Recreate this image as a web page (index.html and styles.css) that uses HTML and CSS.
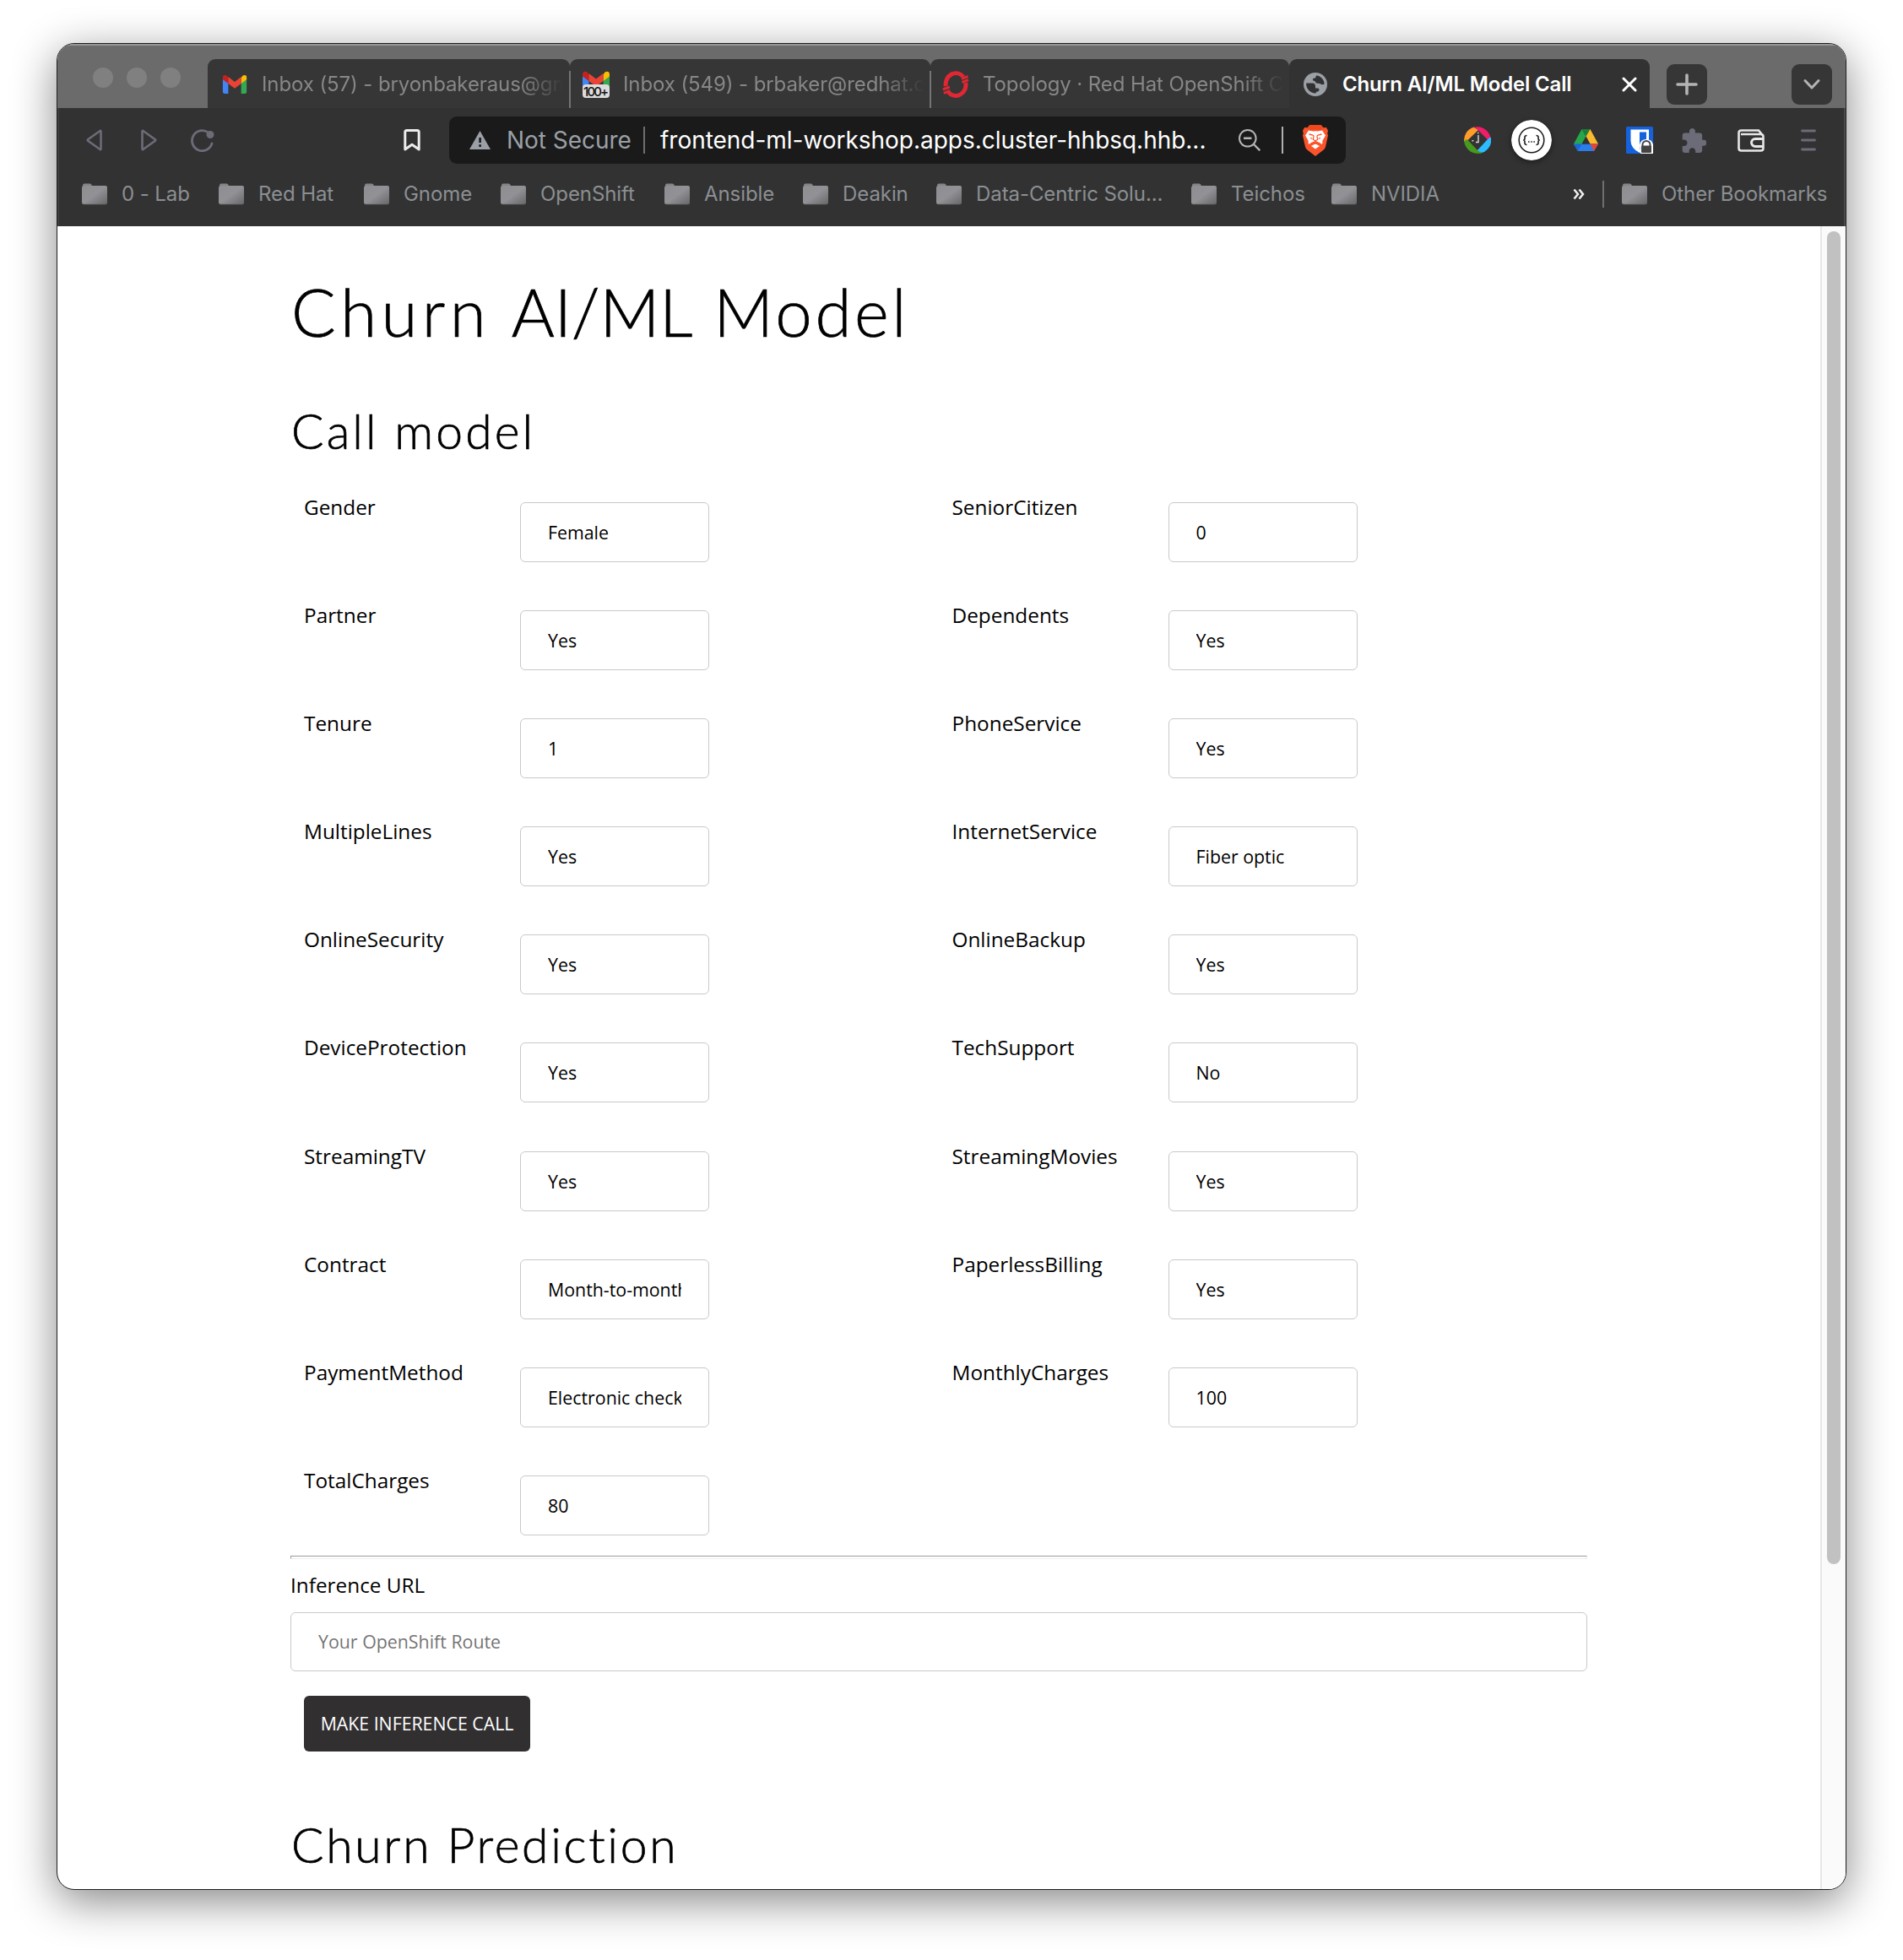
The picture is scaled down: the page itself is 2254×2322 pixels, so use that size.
FILE: index.html
```html
<!DOCTYPE html>
<html lang="en">
<head>
<meta charset="utf-8">
<title>Churn AI/ML Model Call</title>
<link rel="stylesheet" href="styles.css">
</head>
<body>
<svg class="defs" width="0" height="0" aria-hidden="true">
  <defs>
    <linearGradient id="fg" x1="0" y1="0" x2="1" y2="1"><stop offset="0" stop-color="#8e8d92"/><stop offset=".5" stop-color="#929196"/><stop offset="1" stop-color="#686769"/></linearGradient>
    <symbol id="folder" viewBox="0 0 30 26"><path d="M1 5V2.500Q1 .5 3 .5h6.500q1.500 0 2 1.500L12 3.200H28Q30 3.500 30 5z" fill="#848484"/><rect x="0" y="3.500" width="30" height="22" rx="2.500" fill="#555"/><rect x="0" y="3" width="30" height="21.800" rx="2.500" fill="url(#fg)"/></symbol>
    <symbol id="gmail" viewBox="0 0 30 23"><path d="M0 5v15.500Q0 23 2.500 23H7V9z" fill="#4285f4"/><path d="M30 5v15.500q0 2.500-2.500 2.500H23V9z" fill="#34a853"/><path d="M23 3.500V10.500L30 5.300V3.200Q30 0 27 0 25.800 0 24.800.8z" fill="#fbbc04"/><path d="M7 3.500V10.500L0 5.300V3.200Q0 0 3 0 4.200 0 5.200.8z" fill="#c5221f"/><path d="M7 2.200l8 6.100 8-6.100v8.300l-8 6-8-6z" fill="#ea4335"/></symbol>
  </defs>
</svg>
<div class="window">
  <div class="titlebar">
    <div class="lights"><i></i><i></i><i></i></div>
    <div class="tab tab-first">
      <svg class="gm" viewBox="0 0 30 23"><use href="#gmail"/></svg>
      <span class="tab-title">Inbox (57) - bryonbakeraus@gmail.com</span>
    </div>
    <div class="tab tab-second">
      <svg class="ic32" viewBox="0 0 32 32"><use href="#gmail" width="32" height="26" x="0" y="0"/><rect x="0" y="16" width="32" height="16" rx="4" fill="#dcdcdc"/><text class="badge-text" x="16" y="29.500" text-anchor="middle" textLength="30">100+</text></svg>
      <span class="tab-title">Inbox (549) - brbaker@redhat.com</span>
    </div>
    <div class="tab tab-third">
      <svg class="ic32" viewBox="0 0 32 32" fill="none" stroke="#e02733" stroke-width="5"><path d="M4.300 18A12 13 0 0 1 25 7"/><path d="M27.800 14A12 13 0 0 1 7 25"/><path d="M.8 22l8-3M1.800 26.300l7.500-2.800M23 9.300l7.500-2.800M23.500 13.500l7.500-2.800" stroke-width="3"/></svg>
      <span class="tab-title">Topology · Red Hat OpenShift Console</span>
    </div>
    <div class="tab tab-active">
      <svg class="globe" viewBox="0 0 28 28"><circle cx="14" cy="14" r="14" fill="#9aa0a6"/><path d="M3.200 12.500h7.500q3.300.3 3.300 3.500v2.500h3q2 .5 1.500 2.500-.7 1.800-3 1.800-.7 0-1 1.600A11 11 0 0 1 3.200 12.500z" fill="#323232"/><path d="M15.500 3.200q-1 .8-1 2-.2 1.500-2.500 1.600-1.500.4-1 2 .2 1.200 2.500 1.200.3 2.600 2.700 2.800 2.500-.5 4 .7 2 1.500 4.500 0A11 11 0 0 0 15.500 3.200z" fill="#323232"/></svg>
      <span class="tab-title">Churn AI/ML Model Call</span>
      <svg class="close" viewBox="0 0 18 18"><path d="M2 2l14 14M16 2L2 16" stroke="#fff" stroke-width="3" stroke-linecap="round"/></svg>
    </div>
    <div class="sqbtn"><svg width="26" height="26" viewBox="0 0 26 26"><path d="M13 2v22M2 13h22" stroke="#b4b4b4" stroke-width="3.600" stroke-linecap="round"/></svg></div>
    <div class="sqbtn sqbtn-end"><svg width="22" height="16" viewBox="0 0 22 16"><path d="M3 3.500l8 8.500 8-8.500" fill="none" stroke="#b4b4b4" stroke-width="3" stroke-linecap="round" stroke-linejoin="round"/></svg></div>
  </div>

  <div class="toolbar">
    <svg class="nav-back" viewBox="0 0 20 26"><path d="M17.500 2.500v21q0 1-1 .5L2.200 13.800q-.8-.8 0-1.600L16.500 2q1-.5 1 .5z"/></svg>
    <svg class="nav-fwd" viewBox="0 0 20 26"><path d="M2.500 2.500v21q0 1 1 .5L17.800 13.800q.8-.8 0-1.600L3.500 2q-1-.5-1 .5z"/></svg>
    <svg class="nav-reload" viewBox="0 0 28 27"><path d="M25 17A12 12 0 1 1 20.500 3.900"/><circle cx="23" cy="6.500" r="4.500" fill="#6b6c78" stroke="none"/></svg>
    <svg class="nav-mark" viewBox="0 0 20 26"><path d="M1.800 3.500q0-2 2-2h12.400q2 0 2 2V24l-8.200-5.800L1.800 24z"/></svg>
    <div class="omnibox">
      <svg class="warn" viewBox="0 0 25 22"><path d="M12.500 0L25 22H0z" fill="#9aa0a6"/><path d="M11.300 8h2.600v6h-2.600zM11.300 16.300h2.600v2.700h-2.600z" fill="#1a1a1a"/></svg>
      <span class="insecure">Not Secure</span>
      <i class="bar"></i>
      <span class="url">frontend-ml-workshop.apps.cluster-hhbsq.hhb...</span>
      <svg class="lens" viewBox="0 0 26 26" fill="none" stroke="#b5b5b5" stroke-width="2"><circle cx="10.800" cy="10.800" r="9.800"/><path d="M6 10.800h9.500M18 18l7.300 7.300" stroke-width="2.400"/></svg>
      <i class="bar bar-light"></i>
      <svg class="brave" viewBox="0 0 32 37"><path d="M9.500 0h13l3 3.300 3.500-.3 2 4-.8 3 .8 2.500-3 13.500q-.5 2-2 3.200L16 37 6 29.200Q4.500 28 4 26L1 12.500l.8-2.500L1 7l2-4 3.500.3z" fill="#fb542b"/><path d="M9.500 0h13l3 3.300-3 3-6.500-1-6.500 1-3-3z" fill="#f0481c"/><path d="M8 6.500l5.500 1q2.500-.6 5 0l5.500-1 4 6-3.500 6q-.5 1 0 2l-.5 2.500-4-2.500-4-1.500-4 1.500L8 23l-.5-2.500q.5-1 0-2L4 12.500z" fill="#fff"/><path d="M11 25l5-3 5 3-5 3.500z" fill="#fff"/><path d="M8.500 11l4.500 1.200q1.300.3 1 2l-.8 2.800 2.800 2 2.800-2-.8-2.800q-.3-1.700 1-2l4.500-1.200M10 15.500l2 .7M22 15.500l-2 .7M16 19.500v2.500l-5 1.500M16 22l5 1.500" fill="none" stroke="#fb542b" stroke-width="1.300"/></svg>
    </div>
    <div class="exts">
      <svg class="ic32" viewBox="0 0 32 32"><circle cx="16" cy="16" r="15.800" fill="#333"/><path d="M.2 18A16 16 0 0 1 12 .6L17 4 3 17.500z" fill="#ff9c2a"/><path d="M11 .9A16 16 0 0 1 31.500 13L29 16.500 15.500 3z" fill="#f01d68"/><path d="M31.900 12.500A16 16 0 0 1 19 31.700L15 29 29 14z" fill="#2cbcff"/><path d="M.2 17A16 16 0 0 0 22 30.800L17 29 3.500 15z" fill="#479a1d"/><path d="M17 10v8.500h-3M9.500 16.800h1.800M16 7.500h1.500" fill="none" stroke="#ddd" stroke-width="1.400"/></svg>
      <svg class="swag" viewBox="0 0 48 48"><circle cx="24" cy="24" r="24" fill="#fff"/><circle cx="24" cy="24" r="14.800" fill="none" stroke="#1e1e1e" stroke-width="1.600"/><path d="M18.500 18.500q-2.500 0-2.500 2v1.500q0 2-1.800 2 1.800 0 1.800 2v1.500q0 2 2.500 2M29.500 18.500q2.500 0 2.500 2v1.500q0 2 1.800 2-1.800 0-1.800 2v1.500q0 2-2.500 2" fill="none" stroke="#1e1e1e" stroke-width="1.600"/><path d="M20 26h1.600M23.200 26h1.600M26.400 26h1.600" stroke="#1e1e1e" stroke-width="1.600"/></svg>
      <svg class="drive" viewBox="0 0 29 26"><path d="M9.500 0L14.500 8.500 5 26 0 17.500z" fill="#28a64a"/><path d="M9.500 0h10l-5 8.500z" fill="#188038"/><path d="M19.500 0L29 17.500H19.500l-5-9z" fill="#fbb92c"/><path d="M0 17.500h29L24 26H5z" fill="#2b7de9"/><path d="M29 17.500H19.500L24 26z" fill="#ea4335"/><path d="M0 17.500h9.500L5 26z" fill="#1b66d1"/><path d="M14.500 8.800l4.700 8.700H9.800z" fill="#323232"/></svg>
      <svg class="ic32 bw" viewBox="0 0 32 32"><rect width="32" height="32" rx="1.500" fill="#1662dc"/><path d="M5.500 3.500h21.500v13q0 9-11 14.500-10.500-5.500-10.500-14z" fill="#fff"/><path d="M16 6.500h8v10.500q0 6-8 10.500z" fill="#1662dc"/><path d="M16 22q1-7 8-7 6.500 0 8 6v11H17z" fill="#fff"/><path d="M19.500 23v-1.500a4.500 4.500 0 0 1 9 0V23" fill="none" stroke="#444" stroke-width="2"/><rect x="18" y="22.500" width="12" height="8.500" rx="1" fill="#444"/></svg>
      <svg class="puzzle" viewBox="1.500 1 21 21"><path d="M20.500 11H19V7c0-1.100-.9-2-2-2h-4V3.500C13 2.120 11.880 1 10.500 1S8 2.120 8 3.500V5H4c-1.100 0-1.990.9-1.990 2v3.800H3.500c1.490 0 2.700 1.210 2.700 2.700s-1.210 2.700-2.700 2.700H2V20c0 1.100.9 2 2 2h3.800v-1.500c0-1.490 1.210-2.700 2.700-2.700 1.490 0 2.700 1.210 2.700 2.700V22H17c1.100 0 2-.9 2-2v-4h1.500c1.380 0 2.500-1.120 2.500-2.500S21.880 11 20.500 11z" fill="#6b6c78"/></svg>
      <svg class="wallet" viewBox="0 0 32 27" fill="none" stroke="#e6e6e6" stroke-width="2.600"><path d="M29.500 8v-1L25 1.500H4.500q-3 0-3 3v18q0 3 3 3h23q3 0 3-3V9q0-3-3-3H4"/><path d="M30.500 11.500H21a4.500 4.500 0 0 0 0 9h9.500" stroke-width="3"/></svg>
      <svg class="menu" viewBox="0 0 18 26" stroke="#6b6c78" stroke-width="2.800" stroke-linecap="round"><path d="M1.500 2h15M1.500 13h15M1.500 24h15"/></svg>
    </div>
  </div>

  <div class="bookmarks">
    <span class="bm bm-lab"><svg><use href="#folder"/></svg>0 - Lab</span>
    <span class="bm bm-redhat"><svg><use href="#folder"/></svg>Red Hat</span>
    <span class="bm bm-gnome"><svg><use href="#folder"/></svg>Gnome</span>
    <span class="bm bm-openshift"><svg><use href="#folder"/></svg>OpenShift</span>
    <span class="bm bm-ansible"><svg><use href="#folder"/></svg>Ansible</span>
    <span class="bm bm-deakin"><svg><use href="#folder"/></svg>Deakin</span>
    <span class="bm bm-data"><svg><use href="#folder"/></svg>Data-Centric Solu...</span>
    <span class="bm bm-teichos"><svg><use href="#folder"/></svg>Teichos</span>
    <span class="bm bm-nvidia"><svg><use href="#folder"/></svg>NVIDIA</span>
    <svg class="more" viewBox="0 0 14 14" fill="none" stroke="#f0f0f0" stroke-width="2.500"><path d="M1.500 1.500L6 7l-4.500 5.500M7.500 1.500L12 7l-4.500 5.500"/></svg>
    <i class="bar bar-bm"></i>
    <span class="bm"><svg><use href="#folder"/></svg>Other Bookmarks</span>
  </div>

  <div class="viewport">
    <main class="page">
      <h1><span class="wide">Churn</span> <span class="tight">AI/ML</span> Model</h1>
      <h2>Call model</h2>
      <form class="fields">
        <label>Gender</label><input type="text" value="Female"><label>SeniorCitizen</label><input type="text" value="0">
        <label>Partner</label><input type="text" value="Yes"><label>Dependents</label><input type="text" value="Yes">
        <label>Tenure</label><input type="text" value="1"><label>PhoneService</label><input type="text" value="Yes">
        <label>MultipleLines</label><input type="text" value="Yes"><label>InternetService</label><input type="text" value="Fiber optic">
        <label>OnlineSecurity</label><input type="text" value="Yes"><label>OnlineBackup</label><input type="text" value="Yes">
        <label>DeviceProtection</label><input type="text" value="Yes"><label>TechSupport</label><input type="text" value="No">
        <label>StreamingTV</label><input type="text" value="Yes"><label>StreamingMovies</label><input type="text" value="Yes">
        <label>Contract</label><input type="text" value="Month-to-month"><label>PaperlessBilling</label><input type="text" value="Yes">
        <label>PaymentMethod</label><input type="text" value="Electronic check"><label>MonthlyCharges</label><input type="text" value="100">
        <label>TotalCharges</label><input type="text" value="80">
      </form>
      <hr>
      <label class="url-label">Inference URL</label>
      <input class="route" type="text" placeholder="Your OpenShift Route">
      <button class="call" type="button">MAKE INFERENCE CALL</button>
      <h2 class="prediction">Churn Prediction</h2>
    </main>
    <div class="track"><div class="thumb"></div></div>
  </div>
</div>
</body>
</html>
```
FILE: styles.css
```css
* { box-sizing: border-box; }
html, body { margin: 0; height: 2322px; overflow: hidden; background: #fff; }
body { padding: 51px 67px 0; font-family: Inter, "Liberation Sans", sans-serif; }
svg { display: block; flex: none; }
.defs { position: absolute; }

.window {
  width: 2120px; height: 2188px; border: 1px solid #1c1d1c; border-radius: 21px;
  overflow: hidden; background: #fff; display: flex; flex-direction: column;
  box-shadow: 0 13px 52px rgba(0, 0, 0, .48);
}

.titlebar { height: 76px; flex: none; display: flex; align-items: flex-end; background: #6b6b6b; box-shadow: inset 0 2px 1px #989898; }
.lights { width: 178px; height: 76px; display: flex; gap: 16px; padding: 28px 0 0 42px; }
.lights i { width: 24px; height: 24px; border-radius: 50%; background: #808080; }
.tab { position: relative; height: 58px; flex: none; display: flex; align-items: center; background: #363636; border-radius: 9px 9px 0 0; color: #878787; font-size: 24px; letter-spacing: -.1px; white-space: nowrap; padding-top: 2px; }
.tab-title { flex: 1; min-width: 0; overflow: hidden; line-height: 34px; -webkit-mask-image: linear-gradient(to right, #000 calc(100% - 50px), transparent); mask-image: linear-gradient(to right, #000 calc(100% - 50px), transparent); }
.tab-first { width: 429px; padding-left: 17px; }
.tab-first .tab-title { margin: 0 8px 0 17px; }
.tab-second { width: 427px; padding-left: 15px; }
.tab-second .tab-title { margin: 0 8px 0 16px; }
.tab-third { width: 425px; padding-left: 14px; }
.tab-third .tab-title { margin: 0 7px 0 16px; }
.tab-first::after, .tab-second::after { content: ""; position: absolute; right: -1px; top: 14px; width: 2px; height: 44px; background: #747474; z-index: 1; }
.tab-active { width: 427px; padding-left: 17px; background: #323232; color: #fff; font-weight: 600; }
.tab-active .tab-title { margin-left: 18px; letter-spacing: -.15px; -webkit-mask-image: none; mask-image: none; }
.gm { width: 30px; height: 22px; }
.ic32 { width: 32px; height: 32px; }
.badge-text { font: 500 15px Inter, sans-serif; fill: #111; }
.globe { width: 28px; height: 28px; }
.close { width: 18px; height: 18px; margin-right: 15px; }
.sqbtn { width: 48px; height: 48px; margin: 0 0 4px 20px; border-radius: 9px; background: #363636; display: flex; align-items: center; justify-content: center; }
.sqbtn-end { margin: 0 16px 4px auto; }

.toolbar { height: 76px; flex: none; display: flex; align-items: center; background: #323232; box-shadow: inset -2px 0 #4b4b4b, inset 2px 0 #3e3e3e; }
.nav-back, .nav-fwd { width: 20px; height: 26px; fill: none; stroke: #6b6c78; stroke-width: 2.6; }
.nav-back { margin-left: 34px; }
.nav-fwd { margin-left: 44px; }
.nav-reload { width: 28px; height: 27px; margin-left: 40px; fill: none; stroke: #6b6c78; stroke-width: 2.8; stroke-linecap: round; }
.nav-mark { width: 20px; height: 26px; margin-left: 224px; fill: none; stroke: #ececec; stroke-width: 3; stroke-linejoin: round; }
.omnibox { width: 1062px; height: 56px; margin-left: 34px; border-radius: 9px; background: #1a1a1a; display: flex; align-items: center; font-size: 28px; letter-spacing: -.03px; white-space: nowrap; }
.warn { width: 25px; height: 22px; margin-left: 24px; }
.insecure { width: 162px; padding-left: 19px; color: #9aa0a6; }
.bar { width: 2px; height: 32px; flex: none; margin-left: 19px; background: #6f6f6f; }
.url { width: 686px; margin-left: 18px; color: #fff; }
.lens { width: 26px; height: 26px; margin-left: -1px; }
.bar-light { margin-left: 25px; background: #b0b0b0; }
.brave { width: 32px; height: 37px; margin-left: 22px; }
.exts { display: flex; align-items: center; margin-left: 140px; }
.swag { width: 48px; height: 48px; margin-left: 24px; border-radius: 50%; box-shadow: 0 2px 6px rgba(0, 0, 0, .45); }
.drive { width: 29px; height: 26px; margin-left: 26px; }
.bw { margin-left: 33px; }
.puzzle { width: 29px; height: 29px; margin-left: 34px; }
.wallet { width: 32px; height: 27px; margin-left: 37px; }
.menu { width: 18px; height: 26px; margin-left: 43px; }

.bookmarks { height: 64px; flex: none; display: flex; background: #323232; box-shadow: inset -2px 0 #4b4b4b, inset 2px 0 #3e3e3e; padding-left: 29px; color: #8b8f92; font-size: 24px; line-height: 36px; letter-spacing: -.08px; white-space: nowrap; padding-top: 8px; }
.bm { display: flex; flex: none; height: 36px; }
.bm svg { width: 30px; height: 26px; margin: 5px 17px 0 0; }
.bm-lab { width: 162px; }
.bm-redhat { width: 172px; }
.bm-gnome { width: 162px; }
.bm-openshift { width: 194px; }
.bm-ansible { width: 164px; }
.bm-deakin { width: 158px; }
.bm-data { width: 302px; }
.bm-teichos { width: 166px; }
.bm-nvidia { width: 286px; }
.more { width: 14px; height: 14px; margin-top: 11px; }
.bar-bm { margin: 2px 21px 0 21px; }

.viewport { flex: 1; display: flex; min-height: 0; overflow: hidden; }
.page { flex: 1; padding: 54px 0 0 276px; color: #000; font-family: "Open Sans", "Noto Sans", sans-serif; font-size: 24.35px; }
h1, h2 { margin: 0; font-family: Lato, sans-serif; font-weight: 300; -webkit-text-stroke: .7px #000; }
h1 { padding-left: 1px; font-size: 78px; line-height: 94px; letter-spacing: 3.6px; }
h1 .wide { letter-spacing: 5.4px; }
h1 .tight { letter-spacing: -.2px; }
h2 { margin-top: 60px; padding-left: 1px; font-size: 57px; line-height: 68px; letter-spacing: 3.1px; }
.fields { display: grid; grid-template-columns: 256px 511.5px 256px 512.5px; grid-template-rows: repeat(9, 128.1px) 107px; margin: 39px 0 0 16px; width: 1536px; }
label { line-height: 36px; }
input { width: 224px; height: 71px; margin: 12px 0 0; padding: 0 32px; border: 1px solid #c9c9c9; border-radius: 6px; background: #fff; color: #000; font: 21.35px "Open Sans", "Noto Sans", sans-serif; }
input::placeholder { color: #757575; opacity: 1; }
hr { width: 1536px; height: 4px; margin: 0; border: 1px solid; border-color: #9a9a9a #eee #eee #9a9a9a; background: #fff; }
.url-label { display: block; margin-top: 13px; }
.route { display: block; width: 1536px; height: 70px; margin-top: 14px; }
.call { display: block; width: 268px; height: 66px; margin: 29px 0 0 16px; padding: 0; border: 0; border-radius: 6px; background: #322f30; color: #fff; font: 21.3px "Open Sans", "Noto Sans", sans-serif; }
.prediction { margin-top: 76px; letter-spacing: 2.7px; }
.track { width: 30px; flex: none; background: #fafafa; border-left: 2px solid #e7e7e7; padding: 6px 0 0 6px; }
.thumb { width: 16px; height: 1579px; border-radius: 8px; background: #c1c1c1; }
```
